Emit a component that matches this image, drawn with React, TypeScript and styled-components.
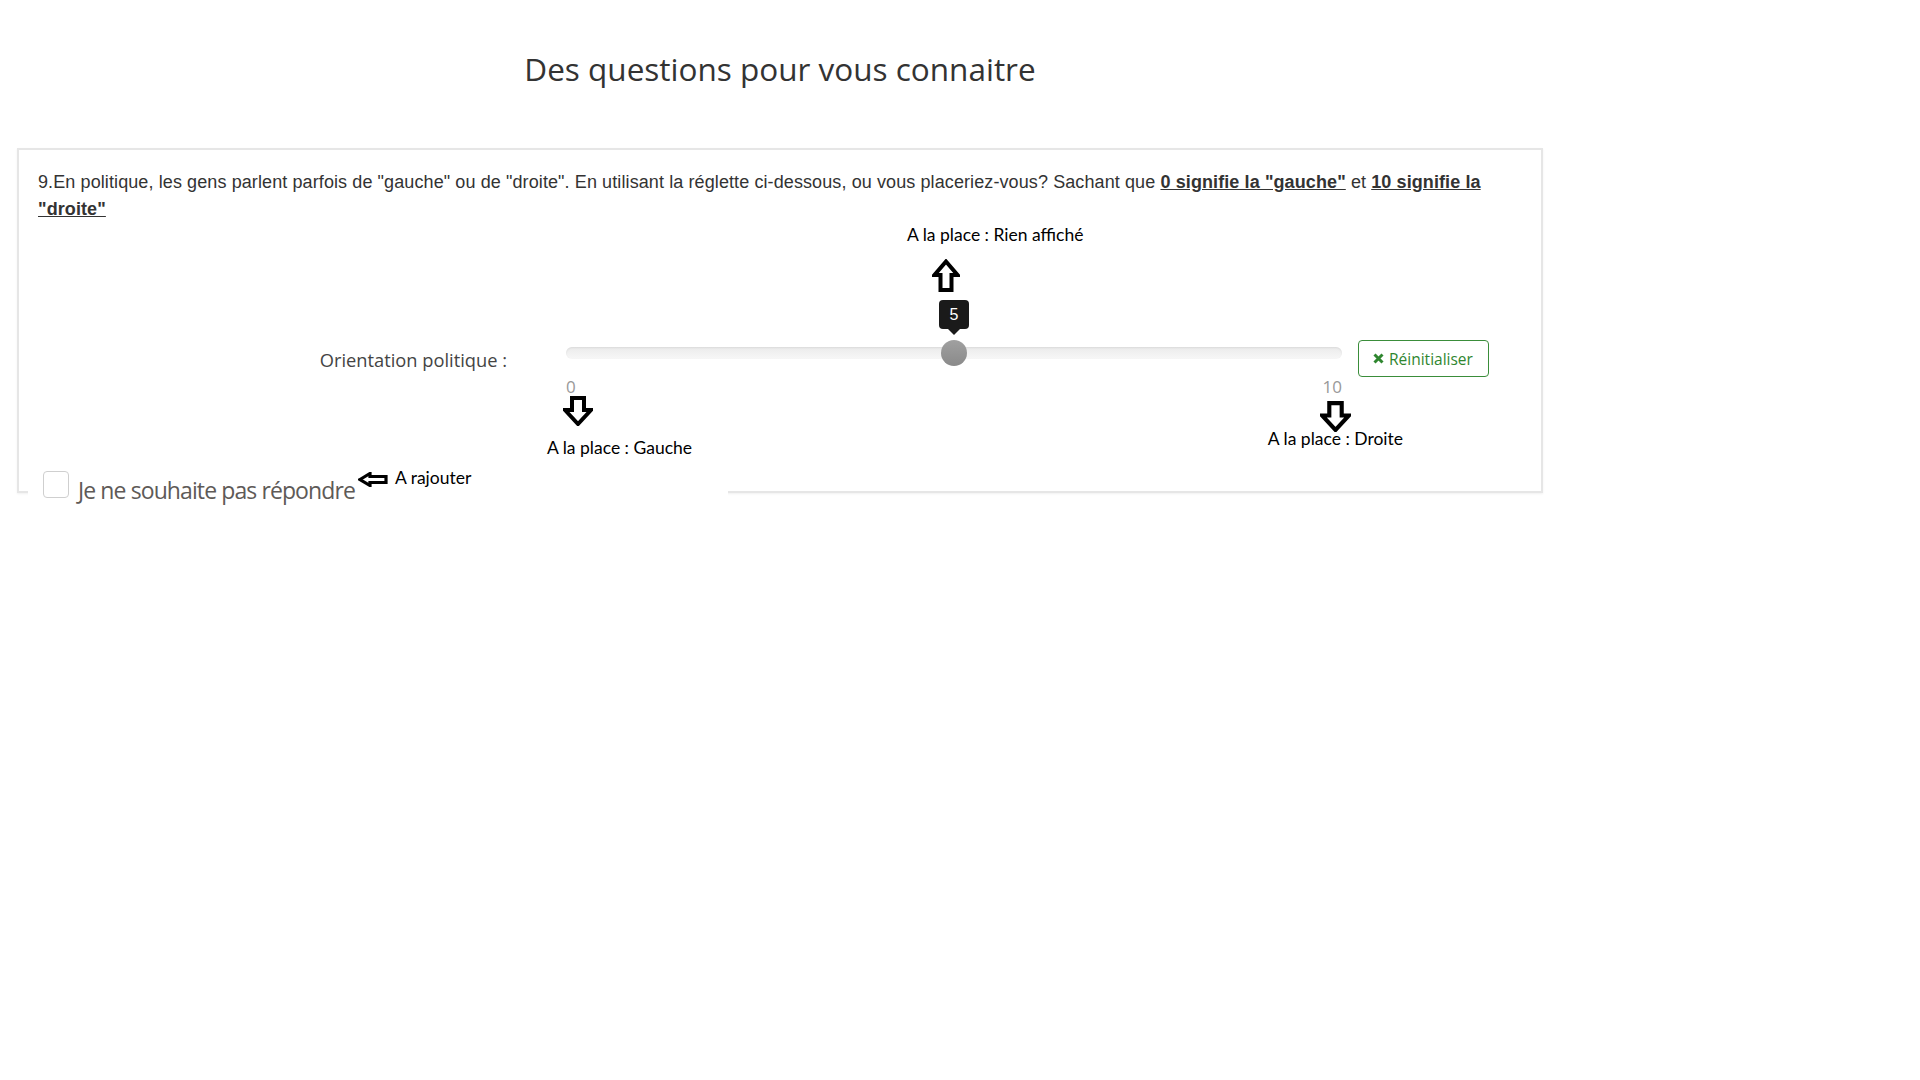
import React from 'react'
import styled, { createGlobalStyle } from 'styled-components'

const GlobalStyle = createGlobalStyle`
  body {
    margin: 0;
    background: #fff;
    font-family: 'Open Sans', sans-serif;
  }
`

const Page = styled.div`
  width: 1526px;
  padding: 0 17px 120px;
`

const Title = styled.h1`
  margin: 48px 0 58px;
  font-family: 'Open Sans', sans-serif;
  font-weight: 400;
  font-size: 31.5px;
  line-height: 42px;
  color: #333;
  text-align: center;
`

const Card = styled.div`
  border: 2px solid #e6e6e6;
  box-shadow: 0 1px 2px rgba(0, 0, 0, 0.06);
  padding: 19px 19px 0;
`

const Question = styled.p`
  margin: 0;
  font-family: 'Liberation Sans', Arial, sans-serif;
  font-size: 18px;
  letter-spacing: 0.1px;
  line-height: 27px;
  color: #333;
`

const Strong = styled.strong`
  text-decoration: underline;
`

const Note = styled.div`
  font-family: Lato, 'Open Sans', sans-serif;
  font-size: 17.5px;
  line-height: 22px;
  color: #000;
  white-space: nowrap;
`

const TopNote = styled(Note)`
  margin: 1px 0 0 869px;
`

const ArrowBox = styled.div<{ $w: number; $h: number }>`
  width: ${(p) => p.$w}px;
  height: ${(p) => p.$h}px;
  svg {
    display: block;
  }
`

const UpArrowRow = styled.div`
  margin: 13px 0 0 894px;
`

const SliderRow = styled.div`
  display: flex;
  align-items: flex-start;
  margin-top: 48px;
`

const Label = styled.label`
  width: 528px;
  box-sizing: border-box;
  padding-right: 59px;
  margin-top: 7px;
  text-align: right;
  font-size: 18.3px;
  line-height: 25px;
  color: #444;
`

const Track = styled.div`
  position: relative;
  width: 776px;
  height: 26px;
  display: flex;
  align-items: center;
`

const Rail = styled.div`
  width: 100%;
  height: 12px;
  border-radius: 6px;
  background: linear-gradient(to bottom, #ebebeb, #f7f7f7);
  box-shadow: inset 0 1px 2px rgba(0, 0, 0, 0.08);
`

const Handle = styled.div`
  position: absolute;
  top: 0;
  width: 26px;
  height: 26px;
  margin-left: -13px;
  border-radius: 50%;
  background: linear-gradient(to bottom, #a0a0a0, #8a8a8a);
`

const Tooltip = styled.div`
  position: absolute;
  bottom: 37px;
  width: 30px;
  height: 29px;
  margin-left: -15px;
  border-radius: 4px;
  background: #1a1a1a;
  color: #fff;
  font-family: 'Liberation Sans', Arial, sans-serif;
  font-size: 16px;
  line-height: 29px;
  text-align: center;

  &::after {
    content: '';
    position: absolute;
    left: 50%;
    bottom: -6px;
    margin-left: -6px;
    border-left: 6px solid transparent;
    border-right: 6px solid transparent;
    border-top: 6px solid #1a1a1a;
  }
`

const ResetButton = styled.button`
  display: flex;
  align-items: center;
  gap: 5px;
  height: 37px;
  margin-left: 16px;
  padding: 0 15px 0 14px;
  border: 1px solid #3a8d3a;
  border-radius: 4px;
  background: #fff;
  color: #2f862f;
  font-family: 'Open Sans', sans-serif;
  font-size: 15.5px;
  cursor: pointer;
`

const Ticks = styled.div`
  display: flex;
  justify-content: space-between;
  width: 776px;
  margin: -2px 0 0 528px;
  font-size: 17px;
  line-height: 23px;
  color: #999;
`

const BottomNotes = styled.div`
  display: flex;
  justify-content: space-between;
  align-items: flex-start;
  width: 776px;
  margin: -2px 0 0 528px;
`

const LeftNote = styled.div`
  display: flex;
  flex-direction: column;
  align-items: flex-start;
  margin-left: -19px;

  ${ArrowBox} {
    margin-left: 16px;
  }
  ${Note} {
    margin-top: 11px;
  }
`

const RightNote = styled.div`
  display: flex;
  flex-direction: column;
  align-items: center;
  margin-right: -61px;

  ${ArrowBox} {
    margin-top: 5px;
    position: relative;
    z-index: 1;
  }
  ${Note} {
    margin-top: -4px;
  }
`

const NoAnswerRow = styled.div`
  position: relative;
  display: flex;
  align-items: flex-start;
  width: 700px;
  height: 45px;
  margin: 5px 0 -18px -10px;
  padding-left: 15px;
  box-sizing: border-box;
  background: #fff;
`

const Checkbox = styled.span`
  width: 24px;
  height: 25px;
  margin-top: 7px;
  border: 1px solid #cfcfcf;
  border-radius: 4px;
  background: #fff;
`

const NoAnswerLabel = styled.span`
  margin: 11px 0 0 9px;
  font-family: 'Open Sans', sans-serif;
  font-size: 23px;
  line-height: 31px;
  letter-spacing: -0.9px;
  color: #5e5a57;
`

const SideNote = styled.div`
  display: flex;
  align-items: flex-start;
  gap: 7px;
  margin-left: 3px;

  ${ArrowBox} {
    margin-top: 8px;
  }
  ${Note} {
    margin-top: 3px;
  }
`

const UpArrow = () => (
  <ArrowBox $w={28} $h={33}>
    <svg width="28" height="33" viewBox="0 0 28 33">
      <polygon
        points="14,2.5 25.5,16 19.5,16 19.5,31 8.5,31 8.5,16 2.5,16"
        fill="#fff"
        stroke="#000"
        strokeWidth="4"
      />
    </svg>
  </ArrowBox>
)

const DownArrow = ({ size }: { size: number }) => (
  <ArrowBox $w={size} $h={size}>
    <svg width={size} height={size} viewBox="0 0 30 30">
      <polygon
        points="9,2 21,2 21,14 28,14 15,28 2,14 9,14"
        fill="#fff"
        stroke="#000"
        strokeWidth="4"
      />
    </svg>
  </ArrowBox>
)

const LeftArrow = () => (
  <ArrowBox $w={30} $h={15}>
    <svg width="30" height="15" viewBox="0 0 30 15">
      <polygon
        points="2,7.5 12,1.5 12,4.5 28,4.5 28,10.5 12,10.5 12,13.5"
        fill="#fff"
        stroke="#000"
        strokeWidth="3.2"
      />
    </svg>
  </ArrowBox>
)

const TimesIcon = () => (
  <svg width="11" height="11" viewBox="0 0 11 11">
    <path d="M1.5 1.5 L9.5 9.5 M9.5 1.5 L1.5 9.5" stroke="currentColor" strokeWidth="3" />
  </svg>
)

const App: React.FC = () => {
  const value = 5
  const pct = (value / 10) * 100

  return (
    <Page>
      <GlobalStyle />
      <Title>Des questions pour vous connaitre</Title>
      <Card>
        <Question>
          9.En politique, les gens parlent parfois de "gauche" ou de "droite". En utilisant la
          réglette ci-dessous, ou vous placeriez-vous? Sachant que{' '}
          <Strong>0 signifie la "gauche"</Strong> et <Strong>10 signifie la "droite"</Strong>
        </Question>

        <TopNote>A la place : Rien affiché</TopNote>
        <UpArrowRow>
          <UpArrow />
        </UpArrowRow>

        <SliderRow>
          <Label>Orientation politique :</Label>
          <Track>
            <Rail />
            <Tooltip style={{ left: `${pct}%` }}>{value}</Tooltip>
            <Handle style={{ left: `${pct}%` }} />
          </Track>
          <ResetButton>
            <TimesIcon />
            Réinitialiser
          </ResetButton>
        </SliderRow>

        <Ticks>
          <span>0</span>
          <span>10</span>
        </Ticks>

        <BottomNotes>
          <LeftNote>
            <DownArrow size={30} />
            <Note>A la place : Gauche</Note>
          </LeftNote>
          <RightNote>
            <DownArrow size={31} />
            <Note>A la place : Droite</Note>
          </RightNote>
        </BottomNotes>

        <NoAnswerRow>
          <Checkbox />
          <NoAnswerLabel>Je ne souhaite pas répondre</NoAnswerLabel>
          <SideNote>
            <LeftArrow />
            <Note>A rajouter</Note>
          </SideNote>
        </NoAnswerRow>
      </Card>
    </Page>
  )
}

export default App
